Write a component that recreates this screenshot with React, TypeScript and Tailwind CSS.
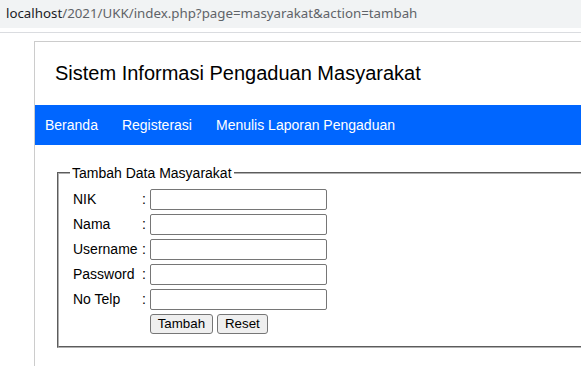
const rows = [
  { label: "NIK", type: "text" },
  { label: "Nama", type: "text" },
  { label: "Username", type: "text" },
  { label: "Password", type: "password" },
  { label: "No Telp", type: "text" },
];

const menu = ["Beranda", "Registerasi", "Menulis Laporan Pengaduan"];

export default function App() {
  return (
    <div className="w-[581px] h-[366px] overflow-hidden bg-white font-['Liberation_Sans',Arial,sans-serif] text-black">
      {/* browser address bar */}
      <div className="h-[28px] bg-[#f1f3f4] flex items-center pl-[6px] font-['Noto_Sans','Open_Sans',sans-serif] text-[13.3px] text-[#5f6368] whitespace-nowrap">
        <span className="text-[#202124]">localhost</span>
        /2021/UKK/index.php?page=masyarakat&amp;action=tambah
      </div>
      <div className="h-[4px]" />
      <div className="h-px bg-[#dadce0]" />

      <div className="ml-[34px] mt-[8px] w-[700px] h-[400px] border border-[#cccccc] bg-white">
        <div className="px-5 py-5">
          <h1 className="text-[20px] leading-[23px] font-normal">
            Sistem Informasi Pengaduan Masyarakat
          </h1>
        </div>
        <nav className="h-[40px] bg-[#0066ff] flex items-center pl-[10px] gap-[24px] text-[14px] text-white">
          {menu.map((m) => (
            <a key={m} href="#" className="cursor-pointer">
              {m}
            </a>
          ))}
        </nav>

        <div className="px-5 pt-5">
          <fieldset className="mx-[2px] border-2 border-[#b0b0b0] [border-style:groove] pl-[11px] pr-3 pt-[5px] pb-[9px] text-[14px]">
            <legend className="px-[2px] leading-[16px]">Tambah Data Masyarakat</legend>
            <table className="border-separate border-spacing-[2px]">
              <tbody>
                {rows.map((r) => (
                  <tr key={r.label}>
                    <td className="p-px w-[67px] whitespace-nowrap">{r.label}</td>
                    <td className="p-px">:</td>
                    <td className="p-px">
                      <input
                        type={r.type}
                        className="block w-[177px] h-[21px] border border-[#767676] rounded-[2px] px-[2px] text-[13px] bg-white"
                      />
                    </td>
                  </tr>
                ))}
                <tr>
                  <td className="p-px" />
                  <td className="p-px" />
                  <td className="p-px">
                    <div className="flex gap-[4px]">
                      <button className="h-[20px] w-[63px] border border-[#767676] rounded-[3px] bg-[#efefef] text-[13.33px] leading-none">
                        Tambah
                      </button>
                      <button className="h-[20px] w-[51px] border border-[#767676] rounded-[3px] bg-[#efefef] text-[13.33px] leading-none">
                        Reset
                      </button>
                    </div>
                  </td>
                </tr>
              </tbody>
            </table>
          </fieldset>
        </div>
      </div>
    </div>
  );
}
